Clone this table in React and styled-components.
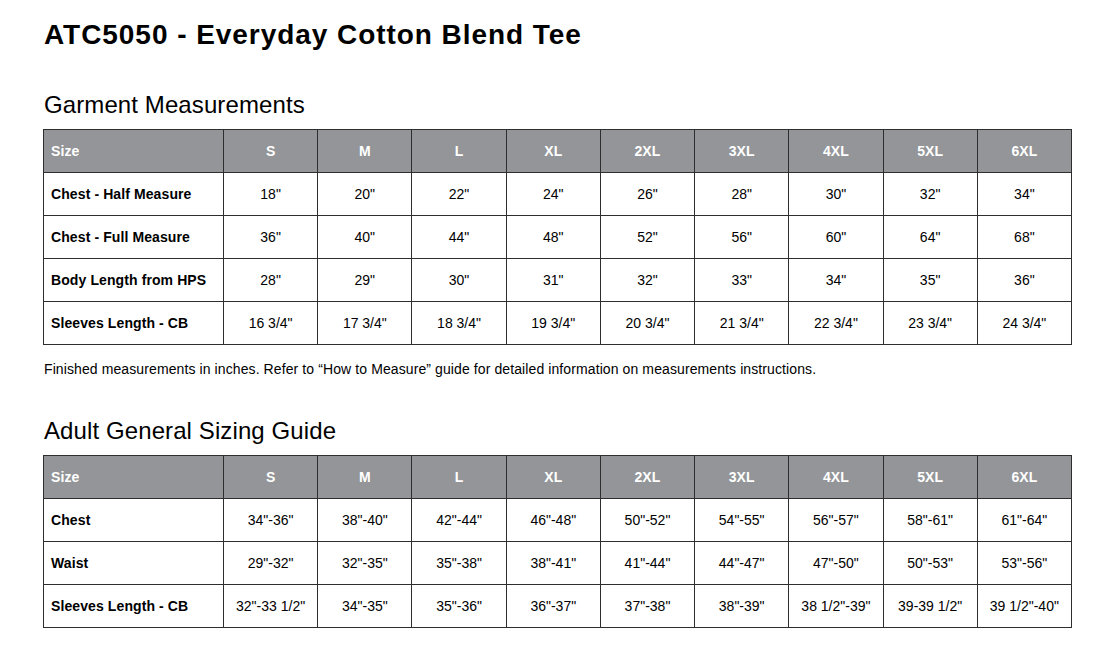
import React from "react"
import styled, { createGlobalStyle } from "styled-components"

const GlobalStyle = createGlobalStyle`
  body {
    margin: 0;
    background: #fff;
    font-family: "Liberation Sans", Arial, sans-serif;
    color: #000;
  }
`

const Page = styled.div`
  padding: 21px 0 0 43px;
`

const Title = styled.h1`
  margin: 0 0 0 1px;
  font-size: 28px;
  line-height: 28px;
  font-weight: bold;
  letter-spacing: 0.95px;
`

const SectionTitle = styled.h2`
  margin: ${p => p.$top}px 0 12px 1px;
  font-size: 24px;
  line-height: 24px;
  font-weight: normal;
  letter-spacing: 0.1px;
`

const Table = styled.table`
  border-collapse: collapse;
  table-layout: fixed;
  width: 1029px;
`

const HeadCell = styled.th`
  background: #939598;
  color: #fff;
  font-size: 14px;
  font-weight: bold;
  height: 42px;
  padding: 0;
  border: 1px solid #2e2e2e;
  text-align: ${p => (p.$label ? "left" : "center")};
  padding-left: ${p => (p.$label ? "7px" : "0")};
  letter-spacing: 0.1px;
`

const Label = styled.td`
  font-size: 14px;
  font-weight: bold;
  height: 42px;
  padding: 0 0 0 7px;
  border: 1px solid #2e2e2e;
  letter-spacing: 0.1px;
`

const Value = styled.td`
  font-size: 14px;
  text-align: center;
  height: 42px;
  padding: 0;
  border: 1px solid #2e2e2e;
`

const Note = styled.p`
  margin: 16px 0 0 1px;
  font-size: 14px;
  line-height: 16px;
  letter-spacing: 0.1px;
`

const sizes = ["S", "M", "L", "XL", "2XL", "3XL", "4XL", "5XL", "6XL"]

const garment = [
  ["Chest - Half Measure", ['18"', '20"', '22"', '24"', '26"', '28"', '30"', '32"', '34"']],
  ["Chest - Full Measure", ['36"', '40"', '44"', '48"', '52"', '56"', '60"', '64"', '68"']],
  ["Body Length from HPS", ['28"', '29"', '30"', '31"', '32"', '33"', '34"', '35"', '36"']],
  ["Sleeves Length - CB", ['16 3/4"', '17 3/4"', '18 3/4"', '19 3/4"', '20 3/4"', '21 3/4"', '22 3/4"', '23 3/4"', '24 3/4"']],
]

const adult = [
  ["Chest", ['34"-36"', '38"-40"', '42"-44"', '46"-48"', '50"-52"', '54"-55"', '56"-57"', '58"-61"', '61"-64"']],
  ["Waist", ['29"-32"', '32"-35"', '35"-38"', '38"-41"', '41"-44"', '44"-47"', '47"-50"', '50"-53"', '53"-56"']],
  ["Sleeves Length - CB", ['32"-33 1/2"', '34"-35"', '35"-36"', '36"-37"', '37"-38"', '38"-39"', '38 1/2"-39"', '39-39 1/2"', '39 1/2"-40"']],
]

const SizeTable = ({ rows }) => (
  <Table>
    <colgroup>
      <col style={{ width: 180 }} />
      {sizes.map(s => (
        <col key={s} />
      ))}
    </colgroup>
    <thead>
      <tr>
        <HeadCell $label>Size</HeadCell>
        {sizes.map(s => (
          <HeadCell key={s}>{s}</HeadCell>
        ))}
      </tr>
    </thead>
    <tbody>
      {rows.map(([label, values]) => (
        <tr key={label}>
          <Label>{label}</Label>
          {values.map((v, i) => (
            <Value key={i}>{v}</Value>
          ))}
        </tr>
      ))}
    </tbody>
  </Table>
)

const App = () => (
  <Page>
    <GlobalStyle />
    <Title>ATC5050 - Everyday Cotton Blend Tee</Title>
    <SectionTitle $top={44}>Garment Measurements</SectionTitle>
    <SizeTable rows={garment} />
    <Note>
      Finished measurements in inches. Refer to “How to Measure” guide for detailed information on measurements instructions.
    </Note>
    <SectionTitle $top={42}>Adult General Sizing Guide</SectionTitle>
    <SizeTable rows={adult} />
  </Page>
)

export default App
